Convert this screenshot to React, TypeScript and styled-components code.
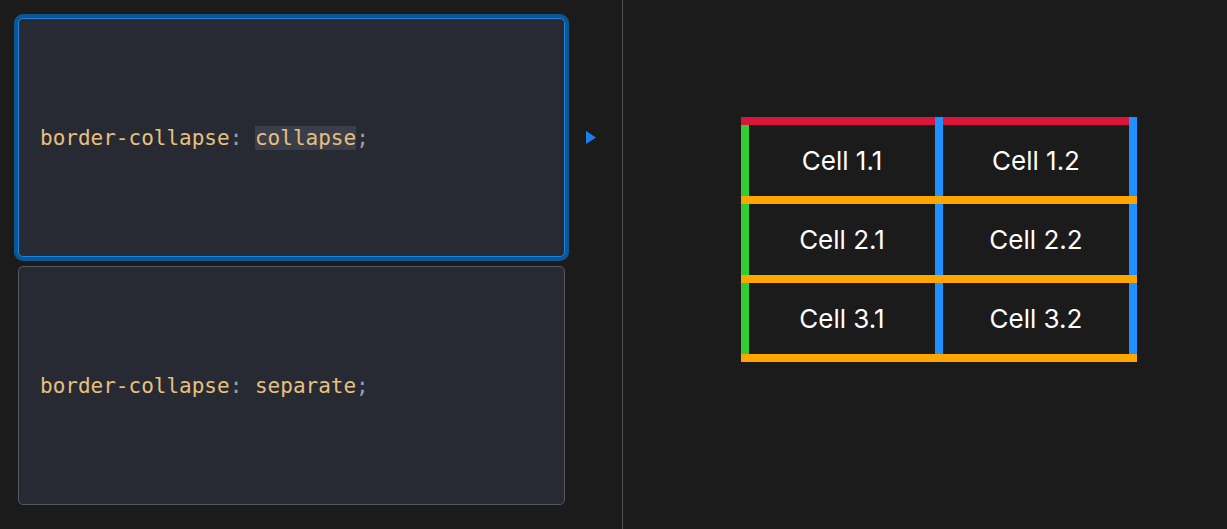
import React from "react";
import styled, { createGlobalStyle } from "styled-components";

const Global = createGlobalStyle`
  html, body { margin: 0; padding: 0; background: #1b1b1b; }
  body { font-family: Inter, "Noto Sans", sans-serif; }
`;

const Page = styled.div`
  display: flex;
  height: 529px;
  width: 1227px;
  background: #1b1b1b;
`;

const ChoicesPanel = styled.div`
  width: 604px;
  padding: 18px 0 0 18px;
  display: flex;
  flex-direction: column;
  gap: 9px;
`;

const ChoiceRow = styled.div`
  display: flex;
  align-items: center;
`;

const Choice = styled.div<{ $selected?: boolean }>`
  box-sizing: border-box;
  width: 547px;
  height: 239px;
  display: flex;
  align-items: center;
  padding-left: 21px;
  padding-top: 1px;
  background: #272a33;
  border: 1px solid ${(p) => (p.$selected ? "#1a84e6" : "#55585f")};
  border-radius: 5px;
  box-shadow: ${(p) => (p.$selected ? "0 0 0 4px #0c5692" : "none")};
`;

const Code = styled.code`
  font-family: "DejaVu Sans Mono", "Liberation Mono", monospace;
  font-size: 21px;
  line-height: 27px;
  color: #e8c07e;
  white-space: pre;
`;

const Punct = styled.span`
  color: #9ba1ad;
`;

const Highlight = styled.span`
  background: #3a3e4a;
`;

const Marker = styled.div`
  width: 21px;
  margin-left: 21px;
  display: flex;
  align-items: center;
`;

const OutputPanel = styled.div`
  flex: 1;
  border-left: 1px solid #4f4f4f;
  padding: 117px 0 0 118px;
`;

const Table = styled.table`
  border-collapse: collapse;
  color: #ffffff;
  font-family: Inter, "Noto Sans", sans-serif;
  font-size: 26px;
`;

const Cell = styled.td`
  border: 8px solid;
  border-color: crimson dodgerblue orange limegreen;
  width: 186px;
  height: 71px;
  padding: 0;
  text-align: center;
  vertical-align: middle;
`;

const rows = [
  ["Cell 1.1", "Cell 1.2"],
  ["Cell 2.1", "Cell 2.2"],
  ["Cell 3.1", "Cell 3.2"],
];

export default function App() {
  return (
    <>
      <Global />
      <Page>
        <ChoicesPanel>
          <ChoiceRow>
            <Choice $selected>
              <Code>
                border-collapse<Punct>:</Punct> <Highlight>collapse</Highlight>
                <Punct>;</Punct>
              </Code>
            </Choice>
            <Marker>
              <svg width="11" height="13" viewBox="0 0 11 13">
                <path d="M0 0 L10 6.5 L0 13 Z" fill="#1a7ff0" />
              </svg>
            </Marker>
          </ChoiceRow>
          <ChoiceRow>
            <Choice>
              <Code>
                border-collapse<Punct>:</Punct> separate<Punct>;</Punct>
              </Code>
            </Choice>
          </ChoiceRow>
        </ChoicesPanel>
        <OutputPanel>
          <Table>
            <tbody>
              {rows.map((r, i) => (
                <tr key={i}>
                  {r.map((c) => (
                    <Cell key={c}>{c}</Cell>
                  ))}
                </tr>
              ))}
            </tbody>
          </Table>
        </OutputPanel>
      </Page>
    </>
  );
}
